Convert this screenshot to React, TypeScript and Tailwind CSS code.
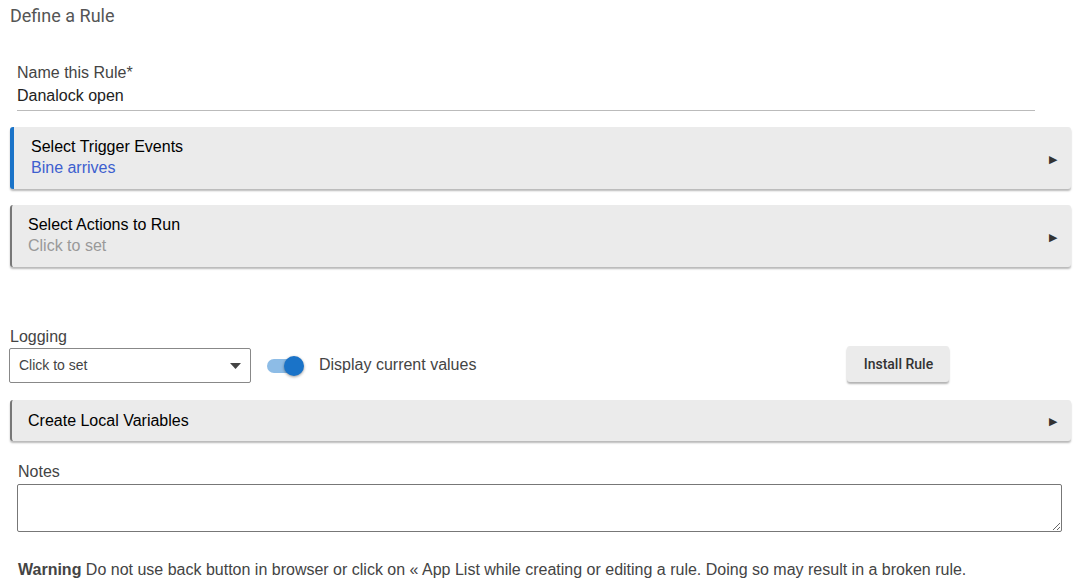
import { useState } from 'react'

function Panel({ title, sub, subClass, accent }: { title: string; sub?: string; subClass?: string; accent: string }) {
  return (
    <div className={`flex items-center bg-[#ebebeb] rounded-[3px] shadow-[0_2px_2px_rgba(0,0,0,0.28)] ${accent}`}>
      <div className="flex-1 flex flex-col justify-center">
        <div className="text-[16px] leading-[20px] text-black">{title}</div>
        {sub && <div className={`text-[16px] leading-[22px] ${subClass}`}>{sub}</div>}
      </div>
      <span className="text-[11px] text-[#333] mr-[14px] mt-[2px]">▶</span>
    </div>
  )
}

export default function App() {
  const [on, setOn] = useState(true)

  return (
    <div className="w-[1076px] h-[587px] bg-white overflow-hidden font-['Liberation_Sans',Arial,sans-serif] text-[#444]">
      <div className="pl-[10px] pt-[5px] text-[18px] leading-[22px] text-[#555] font-['Roboto',sans-serif]">Define a Rule</div>

      <div className="ml-[17px] mr-[41px] mt-[35px] border-b border-[#bbb] pb-[3px]">
        <div className="text-[16px] leading-[22px] text-[#444]">Name this Rule*</div>
        <div className="text-[16px] leading-[22px] text-[#222] mt-[1px]">Danalock open</div>
      </div>

      <div className="ml-[10px] mr-[5px] mt-[16px] flex flex-col gap-[16px]">
        <Panel
          title="Select Trigger Events"
          sub="Bine arrives"
          subClass="text-[#3d5fcf]"
          accent="h-[62px] border-l-[4px] border-[#1a73c8] pl-[17px]"
        />
        <Panel
          title="Select Actions to Run"
          sub="Click to set"
          subClass="text-[#999]"
          accent="h-[62px] border-l-[2px] border-[#777] pl-[16px]"
        />
      </div>

      <div className="ml-[10px] mt-[60px] text-[16px] leading-[20px] text-[#444]">Logging</div>
      <div className="flex items-center mt-[1px]">
        <div className="ml-[9px] w-[242px] h-[35px] border border-[#888] rounded-[2px] flex items-center justify-between pl-[9px] pr-[9px]">
          <span className="text-[14px] text-[#444]">Click to set</span>
          <svg width="11" height="6" viewBox="0 0 11 6"><path d="M0 0 L11 0 L5.5 6 Z" fill="#444" /></svg>
        </div>
        <button
          onClick={() => setOn(!on)}
          className="relative ml-[16px] w-[37px] h-[20px] flex items-center"
        >
          <span className="absolute left-0 right-[2px] h-[14px] rounded-full bg-[#8dbce6]" />
          <span className={`absolute w-[20px] h-[20px] rounded-full bg-[#1a73c8] shadow-[0_1px_3px_rgba(0,0,0,0.4)] ${on ? 'left-[17px]' : 'left-0'}`} />
        </button>
        <span className="ml-[15px] -mt-[2px] text-[16px] text-[#444]">Display current values</span>
        <button className="ml-[371px] -mt-[3px] w-[102px] h-[36px] bg-[#ebebeb] rounded-[3px] shadow-[0_2px_2px_rgba(0,0,0,0.3)] font-['Roboto',sans-serif] font-medium text-[14px] text-[#333]">
          Install Rule
        </button>
      </div>

      <div className="ml-[10px] mr-[5px] mt-[17px]">
        <Panel title="Create Local Variables" accent="h-[41px] border-l-[2px] border-[#777] pl-[16px]" />
      </div>

      <div className="ml-[18px] mt-[21px] text-[16px] leading-[20px] text-[#444]">Notes</div>
      <div className="ml-[17px] mr-[14px] mt-[2px]">
        <textarea className="block w-full h-[48px] border border-[#777] rounded-[2px] resize-y" />
      </div>

      <div className="ml-[18px] mt-[26px] text-[16px] text-[#444]">
        <b className="font-bold">Warning</b> Do not use back button in browser or click on « App List while creating or editing a rule. Doing so may result in a broken rule.
      </div>
    </div>
  )
}
